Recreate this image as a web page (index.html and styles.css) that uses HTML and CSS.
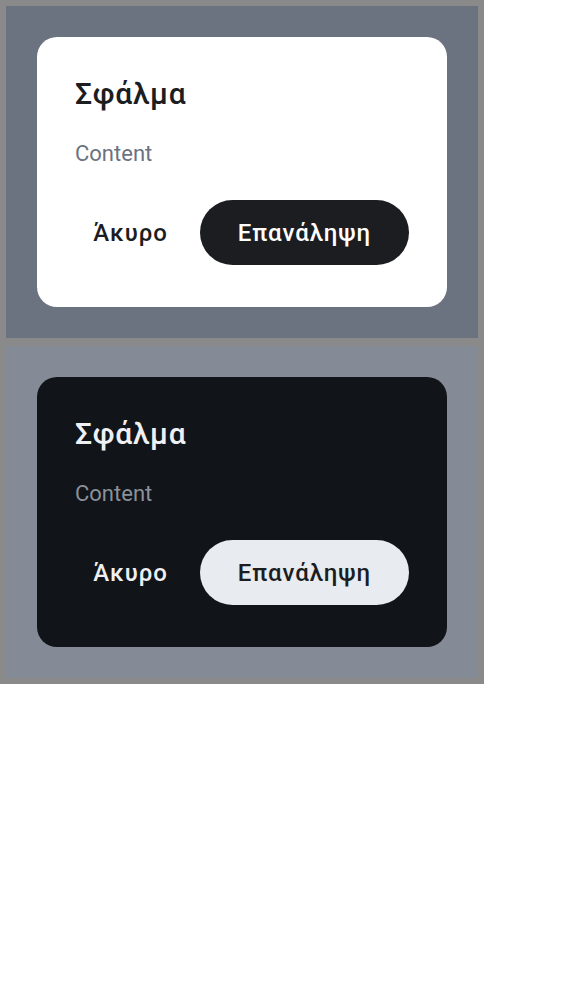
FILE: index.html
```html
<!DOCTYPE html>
<html lang="el">
<head>
<meta charset="utf-8">
<link rel="stylesheet" href="styles.css">
</head>
<body>
<div class="frame">
  <section class="panel panel-light">
    <div class="dialog dialog-light">
      <h2 class="dialog-title">Σφάλμα</h2>
      <p class="dialog-content">Content</p>
      <div class="dialog-actions">
        <button class="btn btn-text">Άκυρο</button>
        <button class="btn btn-filled">Επανάληψη</button>
      </div>
    </div>
  </section>
  <section class="panel panel-dark">
    <div class="dialog dialog-dark">
      <h2 class="dialog-title">Σφάλμα</h2>
      <p class="dialog-content">Content</p>
      <div class="dialog-actions">
        <button class="btn btn-text">Άκυρο</button>
        <button class="btn btn-filled">Επανάληψη</button>
      </div>
    </div>
  </section>
</div>
</body>
</html>
```
FILE: styles.css
```css
html, body {
  margin: 0;
  padding: 0;
  background: #ffffff;
  font-family: Roboto, "Noto Sans", "Liberation Sans", sans-serif;
}

.frame {
  width: 484px;
  box-sizing: border-box;
  padding: 6px;
  background: #8a8a8a;
  display: flex;
  flex-direction: column;
  gap: 8px;
}

.panel {
  height: 332px;
  display: flex;
  align-items: center;
  justify-content: center;
}

.panel-light { background: #6b7280; }
.panel-dark { background: #858b96; }

.dialog {
  width: 410px;
  box-sizing: border-box;
  padding: 39px 38px 42px 38px;
  border-radius: 20px;
  display: flex;
  flex-direction: column;
}

.dialog-light { background: #ffffff; color: #1c1d21; }
.dialog-dark { background: #111418; color: #eef0f3; }

.dialog-title {
  margin: 0;
  font-size: 30px;
  line-height: 36px;
  font-weight: 500;
  letter-spacing: 0.7px;
}

.dialog-content {
  margin: 29px 0 0 0;
  font-size: 22px;
  line-height: 26px;
  font-weight: 400;
}

.dialog-light .dialog-content { color: #6b7280; }
.dialog-dark .dialog-content { color: #8b919a; }

.dialog-actions {
  margin-top: 33px;
  display: flex;
  justify-content: flex-end;
  align-items: center;
  gap: 8px;
}

.btn {
  height: 65px;
  border: none;
  border-radius: 33px;
  font-family: inherit;
  font-size: 24px;
  font-weight: 500;
  letter-spacing: 0.9px;
  padding: 0 38px;
  cursor: pointer;
}

.btn-text {
  background: transparent;
  padding: 0 24px;
}

.dialog-light .btn-text { color: #1c1d21; }
.dialog-dark .btn-text { color: #eef0f3; }

.dialog-light .btn-filled { background: #1c1d21; color: #ffffff; }
.dialog-dark .btn-filled { background: #e8ebf0; color: #1c1d21; }
```
